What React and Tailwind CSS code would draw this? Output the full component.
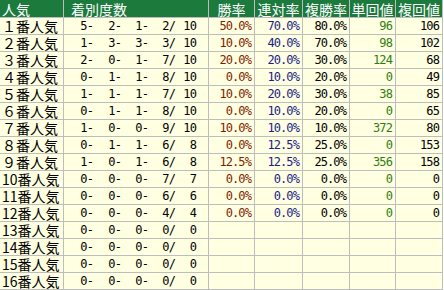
import React from "react";

const rows = [
  ["１番人気", "5-", "2-", "1-", "2/", "10", "50.0%", "70.0%", "80.0%", "96", "106"],
  ["２番人気", "1-", "3-", "3-", "3/", "10", "10.0%", "40.0%", "70.0%", "98", "102"],
  ["３番人気", "2-", "0-", "1-", "7/", "10", "20.0%", "20.0%", "30.0%", "124", "68"],
  ["４番人気", "0-", "1-", "1-", "8/", "10", "0.0%", "10.0%", "20.0%", "0", "49"],
  ["５番人気", "1-", "1-", "1-", "7/", "10", "10.0%", "20.0%", "30.0%", "38", "85"],
  ["６番人気", "0-", "1-", "1-", "8/", "10", "0.0%", "10.0%", "20.0%", "0", "65"],
  ["７番人気", "1-", "0-", "0-", "9/", "10", "10.0%", "10.0%", "10.0%", "372", "80"],
  ["８番人気", "0-", "1-", "1-", "6/", "8", "0.0%", "12.5%", "25.0%", "0", "153"],
  ["９番人気", "1-", "0-", "1-", "6/", "8", "12.5%", "12.5%", "25.0%", "356", "158"],
  ["10番人気", "0-", "0-", "0-", "7/", "7", "0.0%", "0.0%", "0.0%", "0", "0"],
  ["11番人気", "0-", "0-", "0-", "6/", "6", "0.0%", "0.0%", "0.0%", "0", "0"],
  ["12番人気", "0-", "0-", "0-", "4/", "4", "0.0%", "0.0%", "0.0%", "0", "0"],
  ["13番人気", "0-", "0-", "0-", "0/", "0", "", "", "", "", ""],
  ["14番人気", "0-", "0-", "0-", "0/", "0", "", "", "", "", ""],
  ["15番人気", "0-", "0-", "0-", "0/", "0", "", "", "", "", ""],
  ["16番人気", "0-", "0-", "0-", "0/", "0", "", "", "", "", ""],
];

const jp = "font-['Noto_Sans_CJK_JP',sans-serif]";
const mono = "font-['DejaVu_Sans_Mono',monospace] text-[12px] tracking-[-0.9px]";
const bodyCell = "bg-[#ffffe2] flex items-center leading-none";
const numCell = `${bodyCell} ${mono} justify-end pr-[3px]`;
const head = `bg-[#1b7a3c] text-white text-[14px] leading-none flex items-center whitespace-nowrap ${jp}`;

export default function App() {
  return (
    <div className="w-[444px] h-[290px] bg-white overflow-hidden">
      <div className="w-[443px] grid grid-cols-[63px_144px_45px_47px_46px_45px_46px] grid-rows-[17px_repeat(16,16px)] gap-px bg-[#bdbdbd] pr-px pb-px">
        <div className={`${head} pl-[2px]`}>人気</div>
        <div className={`${head} pl-[7px]`}>着別度数</div>
        <div className={`${head} justify-center`}>勝率</div>
        <div className={`${head} justify-center`}>連対率</div>
        <div className={`${head} justify-center`}>複勝率</div>
        <div className={`${head} justify-center`}>単回値</div>
        <div className={`${head} justify-center`}>複回値</div>
        {rows.map((r, i) => (
          <React.Fragment key={i}>
            <div className={`${bodyCell} ${jp} text-[14px] text-black pl-[2px] whitespace-nowrap`}>{r[0]}</div>
            <div className={`${bodyCell} ${mono} text-black`}>
              <span className="w-[29px] text-right">{r[1]}</span>
              <span className="w-[28px] text-right">{r[2]}</span>
              <span className="w-[27px] text-right">{r[3]}</span>
              <span className="w-[27px] text-right">{r[4]}</span>
              <span className="w-[21px] text-right">{r[5]}</span>
            </div>
            <div className={`${numCell} text-[#7f1d00]`}>{r[6]}</div>
            <div className={`${numCell} text-[#1c1c8a]`}>{r[7]}</div>
            <div className={`${numCell} text-black`}>{r[8]}</div>
            <div className={`${numCell} text-[#2f7d10]`}>{r[9]}</div>
            <div className={`${numCell} text-black`}>{r[10]}</div>
          </React.Fragment>
        ))}
      </div>
    </div>
  );
}
